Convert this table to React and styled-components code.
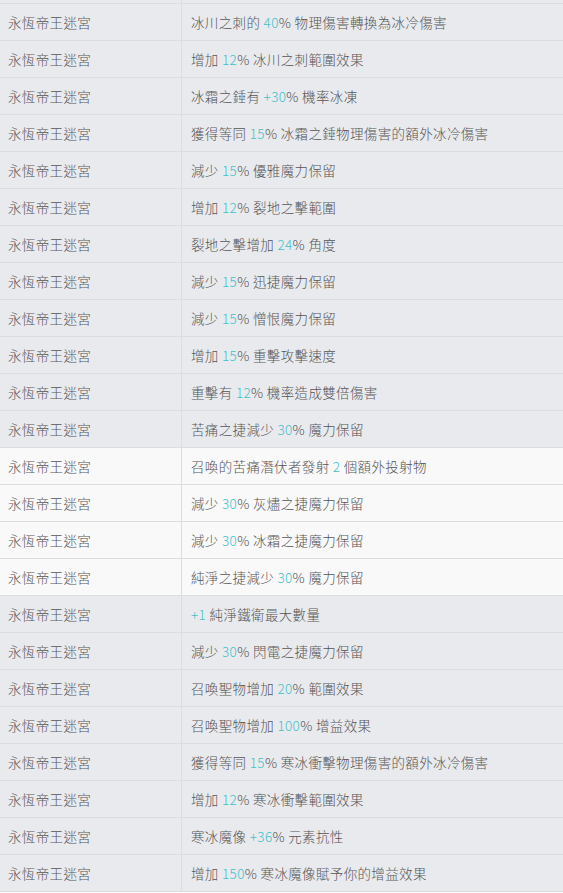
import React from 'react';
import styled, { createGlobalStyle } from 'styled-components';

const GlobalStyle = createGlobalStyle`
  html, body {
    margin: 0;
    padding: 0;
    background: #f9f9fa;
  }
  body {
    font-family: "Noto Sans CJK TC", "Noto Sans", sans-serif;
    overflow: hidden;
  }
`;

const SOURCE = '永恆帝王迷宮';

// [text before, number, text after, light row]
const rows = [
  ['冰川之刺的 ', '40', '% 物理傷害轉換為冰冷傷害'],
  ['增加 ', '12', '% 冰川之刺範圍效果'],
  ['冰霜之錘有 ', '+30', '% 機率冰凍'],
  ['獲得等同 ', '15', '% 冰霜之錘物理傷害的額外冰冷傷害'],
  ['減少 ', '15', '% 優雅魔力保留'],
  ['增加 ', '12', '% 裂地之擊範圍'],
  ['裂地之擊增加 ', '24', '% 角度'],
  ['減少 ', '15', '% 迅捷魔力保留'],
  ['減少 ', '15', '% 憎恨魔力保留'],
  ['增加 ', '15', '% 重擊攻擊速度'],
  ['重擊有 ', '12', '% 機率造成雙倍傷害'],
  ['苦痛之捷減少 ', '30', '% 魔力保留'],
  ['召喚的苦痛潛伏者發射 ', '2', ' 個額外投射物', true],
  ['減少 ', '30', '% 灰燼之捷魔力保留', true],
  ['減少 ', '30', '% 冰霜之捷魔力保留', true],
  ['純淨之捷減少 ', '30', '% 魔力保留', true],
  ['', '+1', ' 純淨鐵衛最大數量'],
  ['減少 ', '30', '% 閃電之捷魔力保留'],
  ['召喚聖物增加 ', '20', '% 範圍效果'],
  ['召喚聖物增加 ', '100', '% 增益效果'],
  ['獲得等同 ', '15', '% 寒冰衝擊物理傷害的額外冰冷傷害'],
  ['增加 ', '12', '% 寒冰衝擊範圍效果'],
  ['寒冰魔像 ', '+36', '% 元素抗性'],
  ['增加 ', '150', '% 寒冰魔像賦予你的增益效果'],
];

const Table = styled.div`
  width: 563px;
  display: flex;
  flex-direction: column;
`;

const Row = styled.div`
  display: grid;
  grid-template-columns: 182px 1fr;
  height: ${p => (p.$partial ? '3px' : '37px')};
  box-sizing: border-box;
  border-bottom: ${p => (p.$partial ? 'none' : '1px solid #dcdde1')};
  background: ${p => (p.$light ? '#f9f9fa' : '#e9eaee')};
  overflow: hidden;
`;

const TopLine = styled.div`
  height: 1px;
  background: #dcdde1;
`;

const Cell = styled.div`
  display: flex;
  align-items: center;
  padding-left: ${p => (p.$first ? '8px' : '9px')};
  border-right: ${p => (p.$first ? '1px solid #dcdde1' : 'none')};
  font-size: 13.5px;
  font-weight: 300;
  color: #555;
  white-space: nowrap;
  letter-spacing: 0.35px;
`;

const Num = styled.span`
  color: #3fc2c8;
`;

export default function App() {
  return (
    <>
      <GlobalStyle />
      <Table>
        <Row $partial>
          <Cell $first />
          <Cell />
        </Row>
        <TopLine />
        {rows.map(function (r, i) {
          return (
            <Row key={i} $light={r[3]}>
              <Cell $first>{SOURCE}</Cell>
              <Cell>
                <span>
                  {r[0]}
                  <Num>{r[1]}</Num>
                  {r[2]}
                </span>
              </Cell>
            </Row>
          );
        })}
      </Table>
    </>
  );
}
